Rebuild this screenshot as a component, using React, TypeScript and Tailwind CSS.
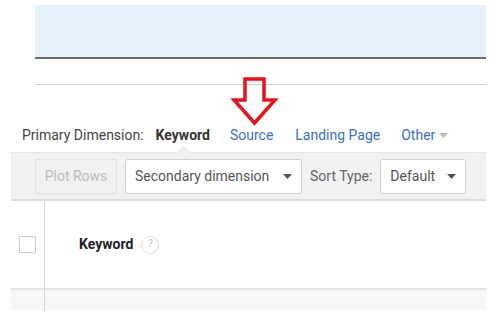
import React from 'react';

const Caret: React.FC<{ className?: string }> = ({ className }) => (
  <svg width="9" height="5" viewBox="0 0 9 5" className={className}>
    <path d="M0 0 L9 0 L4.5 5 Z" fill="currentColor" />
  </svg>
);

const App: React.FC = () => {
  return (
    <div className="relative w-[494px] h-[322px] bg-white overflow-hidden font-['Roboto',sans-serif]">
      {/* top panel */}
      <div className="ml-[35px] mt-[5px] w-[451px] h-[54px] bg-[#e5f1f9] border-b-2 border-[#6b6b6b]" />
      <div className="ml-[35px] mt-[25px] w-[451px] h-px bg-[#d2d2d2]" />

      {/* dimension tabs */}
      <div className="ml-[22px] mt-[41px] flex items-center h-[18px] text-[14px] leading-none">
        <span className="text-[#444]">Primary Dimension:</span>
        <span className="ml-[12px] font-bold text-[#333]">Keyword</span>
        <span className="ml-[20px] text-[#3c6fc7]">Source</span>
        <span className="ml-[22px] text-[#3c6fc7]">Landing Page</span>
        <span className="ml-[21px] text-[#3c6fc7]">Other</span>
        <Caret className="ml-[4px] text-[#bbb]" />
      </div>

      {/* toolbar */}
      <div className="relative ml-[11px] mt-[8px] w-[475px] h-[49px] bg-[#f1f1f1] border-t border-[#e6e6e6] border-b-2 border-b-[#dcdcdc] flex items-center pl-[24px] gap-[8px] whitespace-nowrap">
        <div className="absolute left-[168px] -top-[5px] w-[9px] h-[9px] rotate-45 bg-[#f1f1f1] border-t border-l border-[#e3e3e3]" />
        <div className="shrink-0 h-[35px] w-[82px] flex items-center justify-center rounded-[3px] border border-[#e2e2e2] text-[#bdbdbd] text-[14px]">
          Plot Rows
        </div>
        <div className="shrink-0 h-[35px] w-[177px] flex items-center justify-between pl-[9px] pr-[9px] rounded-[3px] border border-[#cfcfcf] bg-white text-[#555] text-[14px]">
          <span>Secondary dimension</span>
          <Caret className="text-[#555]" />
        </div>
        <span className="shrink-0 text-[14px] text-[#666]">Sort Type:</span>
        <div className="shrink-0 h-[35px] w-[86px] flex items-center justify-between pl-[9px] pr-[9px] rounded-[3px] border border-[#cfcfcf] bg-white text-[#555] text-[14px]">
          <span>Default</span>
          <Caret className="text-[#555]" />
        </div>
      </div>

      {/* table */}
      <div className="ml-[11px] w-[475px] flex">
        <div className="w-[34px] border-r border-[#d6d6d6]">
          <div className="h-[89px] flex items-center justify-center border-b-2 border-[#e4e4e4]">
            <div className="w-[17px] h-[17px] border border-[#cdcdcd] bg-white" />
          </div>
          <div className="h-[20px] bg-[#f7f7f7]" />
        </div>
        <div className="flex-1">
          <div className="h-[89px] flex items-center pl-[34px] border-b-2 border-[#e4e4e4]">
            <span className="text-[14px] font-bold text-[#222]">Keyword</span>
            <span className="ml-[8px] w-[18px] h-[18px] rounded-full border border-[#dedede] flex items-center justify-center text-[11px] text-[#c4c4c4]">
              ?
            </span>
          </div>
          <div className="h-[20px] bg-[#f7f7f7]" />
        </div>
      </div>

      {/* red arrow annotation */}
      <svg className="absolute left-[231px] top-[76px]" width="48" height="51" viewBox="0 0 48 51">
        <path
          d="M14 3 L33 3 L33 24 L44 24 L23.5 47 L3 24 L14 24 Z"
          fill="none"
          stroke="#e3141d"
          strokeWidth="3.5"
          strokeLinejoin="miter"
        />
      </svg>
    </div>
  );
};

export default App;
